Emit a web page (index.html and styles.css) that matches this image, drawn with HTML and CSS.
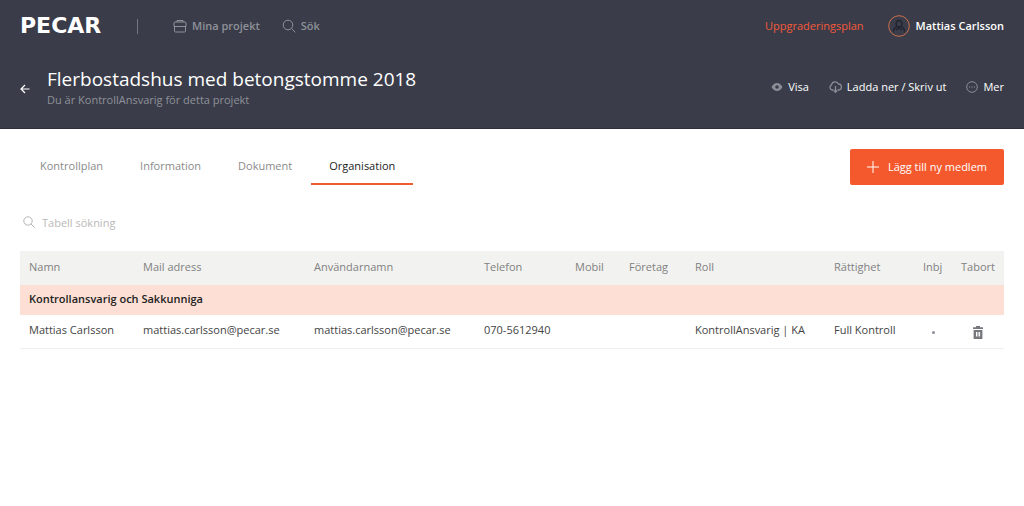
FILE: index.html
```html
<!DOCTYPE html>
<html lang="sv">
<head>
<meta charset="utf-8">
<meta name="viewport" content="width=device-width, initial-scale=1">
<title>Flerbostadshus med betongstomme 2018</title>
<link rel="stylesheet" href="styles.css">
</head>
<body>
<header class="header">
  <div class="topbar">
    <a class="logo" href="#">PECAR</a>
    <span class="divider"></span>
    <nav class="nav">
      <a class="nav-link" href="#">
        <svg class="icon" width="14" height="14" viewBox="0 0 14 14"><path d="M4 3V1.500h6V3M2 3h10q1 0 1 1v3.500H1V4q0-1 1-1zM1.500 7.500V12q0 1 1 1h9q1 0 1-1V7.500"/></svg>
        Mina projekt
      </a>
      <a class="nav-link" href="#">
        <svg class="icon" width="14" height="14" viewBox="0 0 14 14"><circle cx="6" cy="6" r="4.800"/><path d="M9.500 9.500l3.800 3.800"/></svg>
        Sök
      </a>
    </nav>
    <a class="upgrade" href="#">Uppgraderingsplan</a>
    <a class="user" href="#">
      <svg class="avatar" width="22" height="22" viewBox="0 0 22 22"><circle class="avatar-ring" cx="11" cy="11" r="10.300"/><path class="avatar-person" d="M11 5.500a3 3 0 0 1 3 3c0 2-1.300 3.500-3 3.500s-3-1.500-3-3.500a3 3 0 0 1 3-3zM5.500 16.500c0-3 1.500-4 3.500-5M16.500 16.500c0-3-1.500-4-3.500-5M8 15l3-2 3 2"/></svg>
      Mattias Carlsson
    </a>
  </div>
  <div class="project">
    <a class="back" href="#" aria-label="Tillbaka">
      <svg width="10" height="10" viewBox="0 0 10 10"><path d="M9.500 5H1M5 1L1 5l4 4"/></svg>
    </a>
    <div class="project-text">
      <h1 class="title">Flerbostadshus med betongstomme 2018</h1>
      <p class="subtitle">Du är KontrollAnsvarig för detta projekt</p>
    </div>
    <div class="actions">
      <button class="action" type="button">
        <svg width="12" height="12" viewBox="0 0 12 12"><path class="solid" fill-rule="evenodd" d="M.5 6C2 3.300 3.800 2 6 2s4 1.300 5.500 4C10 8.700 8.200 10 6 10S2 8.700.5 6zM6 4.200a1.800 1.800 0 1 0 0 3.600 1.800 1.800 0 0 0 0-3.600z"/></svg>
        Visa
      </button>
      <button class="action" type="button">
        <svg class="icon bold" width="13" height="12" viewBox="0 0 13 12"><path d="M4.500 9H3.500A2.700 2.700 0 0 1 2.500 3.900 3.700 3.700 0 0 1 9.500 3a3 3 0 0 1 0 6H8.500M6.500 5v6M4.800 9.500l1.700 1.700 1.700-1.700"/></svg>
        Ladda ner / Skriv ut
      </button>
      <button class="action" type="button">
        <svg class="icon" width="12" height="12" viewBox="0 0 12 12"><circle cx="6" cy="6" r="5.300"/><path d="M3 6h1.200M5.400 6h1.200M7.800 6H9"/></svg>
        Mer
      </button>
    </div>
  </div>
</header>
<main class="main">
  <div class="toolbar">
    <nav class="tabs">
      <a class="tab" href="#">Kontrollplan</a>
      <a class="tab" href="#">Information</a>
      <a class="tab" href="#">Dokument</a>
      <a class="tab active" href="#" aria-current="page">Organisation</a>
    </nav>
    <button class="add" type="button">
      <svg width="12" height="12" viewBox="0 0 12 12"><path d="M6 0v12M0 6h12"/></svg>
      Lägg till ny medlem
    </button>
  </div>
  <label class="search">
    <svg class="icon" width="12" height="12" viewBox="0 0 12 12"><circle cx="5" cy="5" r="4.200"/><path d="M8 8l3.500 3.500"/></svg>
    <input class="search-input" type="search" placeholder="Tabell sökning" aria-label="Tabell sökning">
  </label>
  <table class="members">
    <colgroup>
      <col class="c-name"><col class="c-mail"><col class="c-user"><col class="c-phone"><col class="c-mobile"><col class="c-company"><col class="c-role"><col class="c-rights"><col class="c-invite"><col class="c-delete">
    </colgroup>
    <thead>
      <tr><th>Namn</th><th>Mail adress</th><th>Användarnamn</th><th>Telefon</th><th>Mobil</th><th>Företag</th><th>Roll</th><th>Rättighet</th><th>Inbj</th><th>Tabort</th></tr>
    </thead>
    <tbody>
      <tr class="group"><th colspan="10" scope="rowgroup">Kontrollansvarig och Sakkunniga</th></tr>
      <tr class="row">
        <td>Mattias Carlsson</td><td>mattias.carlsson@pecar.se</td><td>mattias.carlsson@pecar.se</td><td>070-5612940</td><td></td><td></td><td>KontrollAnsvarig | KA</td><td>Full Kontroll</td>
        <td class="center"><span class="dot"></span></td>
        <td class="center"><button class="delete" type="button" aria-label="Ta bort"><svg width="10" height="13" viewBox="0 0 10 13"><path class="solid" fill-rule="evenodd" d="M0 1.200h3V0h4v1.200h3V3H0zM.6 4h8.800v9H.6zM3 6v4.500h1V6zM4.600 6v4.500h.9V6zM6.100 6v4.500h1V6z"/></svg></button></td>
      </tr>
    </tbody>
  </table>
</main>
</body>
</html>
```
FILE: styles.css
```css
* { box-sizing: border-box; }
body {
  margin: 0;
  background: #fff;
  color: #444;
  font: 11px/18px "Open Sans", "Noto Sans", sans-serif;
}
a { color: inherit; text-decoration: none; }
button { border: 0; padding: 0; background: none; color: inherit; font: inherit; }
svg { flex: none; display: block; }
.icon { fill: none; stroke: currentColor; stroke-width: 1; }
.bold { stroke-width: 1.3; }
.solid { fill: #8b8e97; }

.header { background: #3a3d49; color: #fff; padding: 0 20px 20px; border-bottom: 1px solid #2d303c; }
.topbar { display: flex; align-items: center; height: 52px; }
.logo { font: bold 22px/20px "DejaVu Sans", sans-serif; width: 84px; }
.divider { width: 1px; height: 15px; margin: 0 35px 0 33px; background: #747781; }
.nav { display: flex; gap: 22px; color: #8f919a; font-weight: 600; }
.nav-link { display: flex; align-items: center; gap: 5px; }
.upgrade { margin-left: auto; color: #f4583a; }
.user { display: flex; align-items: center; gap: 6px; margin-left: 24px; font-weight: 600; }
.avatar { fill: none; }
.avatar-ring { stroke: #c96f4b; stroke-width: 1; }
.avatar-person { stroke: #1f222d; stroke-width: 1.3; }
.project { display: flex; align-items: center; padding-top: 14px; }
.back { width: 27px; padding-top: 3px; }
.back svg { fill: none; stroke: #fff; stroke-width: 1.2; }
.title { margin: 0; font-size: 19px; line-height: 26px; font-weight: normal; }
.subtitle { margin: 0; line-height: 16px; color: #8f919a; }
.actions { display: flex; gap: 20px; margin-left: auto; }
.action { display: flex; align-items: center; gap: 5px; }
.action svg { color: #8b8e97; }

.main { padding: 20px; }
.toolbar { display: flex; justify-content: space-between; align-items: flex-start; }
.tabs { display: flex; gap: 1px; margin-left: 2px; }
.tab { padding: 8px 18px; border-bottom: 2px solid transparent; color: #8a8a8a; }
.active { color: #222; border-color: #f15a2d; }
.add { display: flex; align-items: center; gap: 9px; height: 36px; padding: 0 17px; border-radius: 2px; background: #f4592e; color: #fff; }
.add svg { stroke: #fff; stroke-width: 1; }
.search { display: flex; align-items: center; gap: 7px; margin: 27px 3px 19px; color: #b5b5b5; }
.search-input { flex: 1; height: 20px; padding: 0; border: 0; outline: 0; background: none; font: inherit; color: #444; }
.search-input::placeholder { color: #b9b9b9; opacity: 1; }

.members { width: 100%; table-layout: fixed; border-collapse: collapse; }
.members th, .members td { padding: 0 0 2px 9px; text-align: left; white-space: nowrap; }
.members thead th { height: 34px; background: #f2f2f0; color: #818181; font-weight: normal; }
.members .group th { height: 30px; background: #fddfd5; color: #222; font-weight: 600; }
.members .row td { height: 33px; border-bottom: 1px solid #eee; }
.members .row .center { padding: 0; text-align: center; }
.dot { display: inline-block; width: 3px; height: 3px; border-radius: 50%; background: #8b8e97; vertical-align: middle; }
.delete { vertical-align: middle; }
.delete .solid { fill: #77787d; }
.c-name { width: 114px; }
.c-mail { width: 171px; }
.c-user { width: 170px; }
.c-phone { width: 91px; }
.c-mobile { width: 54px; }
.c-company { width: 66px; }
.c-role { width: 139px; }
.c-rights { width: 89px; }
.c-invite { width: 38px; }
.c-delete { width: 52px; }
```
